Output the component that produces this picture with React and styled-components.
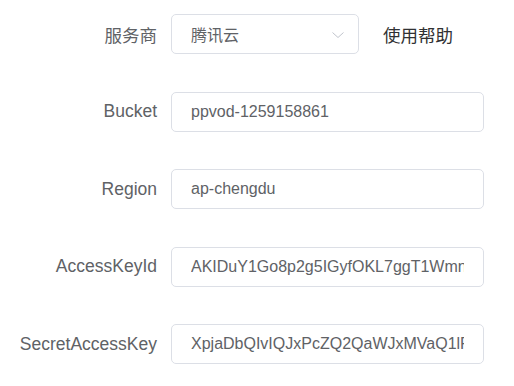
import React from 'react'
import styled, { createGlobalStyle } from 'styled-components'

const GlobalStyle = createGlobalStyle`
  body {
    margin: 0;
    background: #fff;
    font-family: 'Liberation Sans', Arial, 'Noto Sans CJK SC', sans-serif;
  }
`

const Form = styled.form`
  display: flex;
  flex-direction: column;
  gap: 37.6px;
  padding-top: 14px;
`

const Row = styled.div`
  display: flex;
  align-items: center;
  height: 40px;
`

const Label = styled.label`
  box-sizing: border-box;
  width: 171px;
  padding-right: 14px;
  text-align: right;
  font-size: 17.5px;
  color: #606266;
`

const Field = styled.input`
  box-sizing: border-box;
  width: ${p => p.$width || 313}px;
  height: 40px;
  padding: 0 19px;
  border: 1px solid #dcdfe6;
  border-radius: 5px;
  background: #fff;
  font-family: 'Liberation Sans', Arial, 'Noto Sans CJK SC', sans-serif;
  font-size: 16px;
  color: #606266;
  outline: none;
`

const SelectBox = styled.div`
  position: relative;
  display: flex;
  align-items: center;
`

const Arrow = styled.svg`
  position: absolute;
  right: 15px;
  top: 50%;
  margin-top: -2px;
  width: 12px;
  height: 6px;
`

const Help = styled.a`
  margin-left: 24px;
  font-size: 17.5px;
  color: #303133;
  text-decoration: none;
`

const fields = [
  { label: 'Bucket', value: 'ppvod-1259158861' },
  { label: 'Region', value: 'ap-chengdu' },
  { label: 'AccessKeyId', value: 'AKIDuY1Go8p2g5IGyfOKL7ggT1WmnQ3xRt8k' },
  { label: 'SecretAccessKey', value: 'XpjaDbQIvIQJxPcZQ2QaWJxMVaQ1lR8sKd2' },
]

export default function App() {
  return (
    <>
      <GlobalStyle />
      <Form onSubmit={e => e.preventDefault()}>
        <Row>
          <Label>服务商</Label>
          <SelectBox>
            <Field $width={188} value="腾讯云" readOnly />
            <Arrow viewBox="0 0 12 6">
              <path d="M0.5 0.5 L6 5.5 L11.5 0.5" fill="none" stroke="#c0c4cc" strokeWidth="1" />
            </Arrow>
          </SelectBox>
          <Help href="#">使用帮助</Help>
        </Row>
        {fields.map(f => (
          <Row key={f.label}>
            <Label>{f.label}</Label>
            <Field value={f.value} readOnly />
          </Row>
        ))}
      </Form>
    </>
  )
}
